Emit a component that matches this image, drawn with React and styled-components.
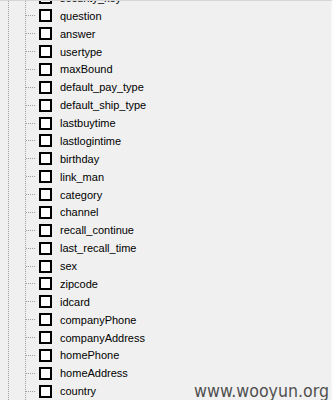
import React from "react"
import styled, { createGlobalStyle } from "styled-components"

const GlobalStyle = createGlobalStyle`
  body {
    margin: 0;
    background: #f0f0f0;
    font-family: "Liberation Sans", Arial, sans-serif;
  }
`

const fields = [
  "security_key",
  "question",
  "answer",
  "usertype",
  "maxBound",
  "default_pay_type",
  "default_ship_type",
  "lastbuytime",
  "lastlogintime",
  "birthday",
  "link_man",
  "category",
  "channel",
  "recall_continue",
  "last_recall_time",
  "sex",
  "zipcode",
  "idcard",
  "companyPhone",
  "companyAddress",
  "homePhone",
  "homeAddress",
  "country",
]

const Panel = styled.div`
  position: relative;
  display: flex;
  height: 399px;
  overflow: hidden;
  border-top: 1px solid #d6d6d6;
  border-right: 2px solid #fafafa;
  background: #f0f0f0;
`

const Guide = styled.div`
  flex: none;
  width: ${(p) => p.$width}px;
  border-right: 1px dotted #a0a0a0;
`

const List = styled.div`
  display: flex;
  flex-direction: column;
  margin-top: -12px;
`

const Row = styled.div`
  display: flex;
  align-items: center;
  height: 18px;
`

const Connector = styled.span`
  width: 9px;
  border-top: 1px dotted #a0a0a0;
  margin-right: 4px;
`

const Box = styled.span`
  box-sizing: border-box;
  width: 13px;
  height: 13px;
  border: 2px solid #000;
  background: #fff;
`

const Label = styled.span`
  margin-left: 8px;
  font-size: 11px;
  color: #000;
  white-space: nowrap;
`

const Watermark = styled.div`
  position: absolute;
  right: 2px;
  bottom: -1px;
  font-family: "DejaVu Sans Condensed", "DejaVu Sans", sans-serif;
  font-stretch: condensed;
  font-size: 17.6px;
  color: #505050;
`

export default function App() {
  return (
    <>
      <GlobalStyle />
      <Panel>
        <Guide $width={8} />
        <Guide $width={16} />
        <List>
          {fields.map((f) => (
            <Row key={f}>
              <Connector />
              <Box />
              <Label>{f}</Label>
            </Row>
          ))}
        </List>
        <Watermark>www.wooyun.org</Watermark>
      </Panel>
    </>
  )
}
